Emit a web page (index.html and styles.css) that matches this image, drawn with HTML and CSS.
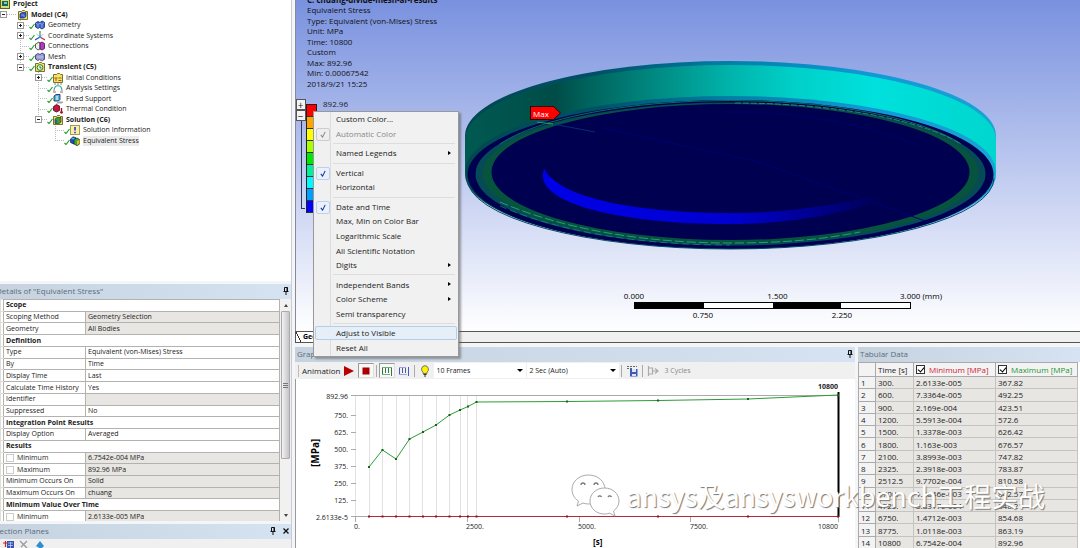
FILE: index.html
```html
<!DOCTYPE html>
<html lang="en">
<head>
<meta charset="utf-8">
<title>Mechanical - Equivalent Stress</title>
<link rel="stylesheet" href="styles.css">
</head>
<body>
<svg class="defs" aria-hidden="true">
  <symbol id="folder" viewBox="0 0 10 10"><path d="M.5 9.500V1.500h3l1-1h2l1 1h2v8z" fill="#f3e36a" stroke="#6b6220" stroke-width=".9"/></symbol>
  <symbol id="i-model" viewBox="0 0 10 10"><use href="#folder"/><path d="M2 4l2-1.500h4v4L6 8H2z" fill="#3556c8" stroke="#122a77" stroke-width=".7"/><path d="M3 5h3v2" fill="none" stroke="#9db7ff" stroke-width=".7"/></symbol>
  <symbol id="i-project" viewBox="0 0 10 10"><rect x=".5" y="0" width="9" height="9.500" fill="#d8dc72" stroke="#5d6420"/><rect x="2" y="2" width="6" height="5" fill="#16685a"/><path d="M4 3h3v2H4z" fill="#7bd0ba"/></symbol>
  <symbol id="i-geo" viewBox="0 0 10 10"><path d="M.5 3L3 1.500 5 2.500 7 1l2.500 1.300v5L7 9 4.500 7.500 3 8.500.5 7z" fill="#3b62c4" stroke="#142c70" stroke-width=".8"/><path d="M1 3.300l2 1.200 2-1.500 2 1.500 2-1.800M3 4.500v3M7 4.500V8" fill="none" stroke="#a9c4ff" stroke-width=".7"/></symbol>
  <symbol id="i-axes" viewBox="0 0 10 10"><path d="M5 6V0" stroke="#2b9c3e" stroke-width="1.200"/><path d="M5 6L0 9" stroke="#2945d0" stroke-width="1.200"/><path d="M5 6l5 3" stroke="#d02b2b" stroke-width="1.200"/><path d="M1.500 3L5 6l3.500-3" fill="none" stroke="#8a9fd8" stroke-width=".7"/><circle cx="5" cy="6" r="1.200" fill="#4d8fe0"/></symbol>
  <symbol id="i-conn" viewBox="0 0 10 10"><path d="M.5 3L4 1l1 1v6L3 9 .5 7z" fill="#eee" stroke="#333" stroke-width=".8"/><path d="M5 2l2-1 2.500 1.500v5L7 9 5 8z" fill="#b23bc0" stroke="#401050" stroke-width=".8"/></symbol>
  <symbol id="i-mesh" viewBox="0 0 10 10"><path d="M.5 3L3 1.500 5 2.500 7 1l2.500 1.300v5L7 9 4.500 7.500 3 8.500.5 7z" fill="#8688c8" stroke="#303060" stroke-width=".8"/><path d="M1 5h8M3 2v6M5 3v5M7 2v7" stroke="#dfe0ff" stroke-width=".5"/></symbol>
  <symbol id="i-trans" viewBox="0 0 10 10"><use href="#folder"/><circle cx="5" cy="5.500" r="2.900" fill="#dff5d8" stroke="#268526"/><path d="M5 4v2h1.500" fill="none" stroke="#222" stroke-width=".7"/></symbol>
  <symbol id="i-init" viewBox="0 0 10 10"><use href="#folder"/><path d="M1.500 5h3M3 5v3M5.500 5h3M5.500 7.500h3" stroke="#a05a10" stroke-width="1"/></symbol>
  <symbol id="i-anal" viewBox="0 0 10 10"><path d="M1 8c0-7 8-7 8 0" fill="none" stroke="#3ba59a" stroke-width="1.100"/><path d="M1 1h2M4 1h2M7 1h2" stroke="#667" stroke-width=".8"/><path d="M0 9h3M7 9h3" stroke="#c04040" stroke-width=".9"/></symbol>
  <symbol id="i-fix" viewBox="0 0 10 10"><path d="M1 2l2-1.500h4v5L5.500 7H1z" fill="#55b8df" stroke="#124" stroke-width=".8"/><path d="M4 2v4" stroke="#fff"/><path d="M4 9.500l2-2M6 9.500l2-2M8 9.500l2-2" stroke="#222" stroke-width=".8"/></symbol>
  <symbol id="i-therm" viewBox="0 0 10 10"><path d="M.5 2.500L3.500.5l3 1.500v4.500l-3 1.500-3-1.500z" fill="#c01545" stroke="#500818" stroke-width=".8"/><path d="M8.500 4v3" stroke="#a01020" stroke-width="1.400"/><circle cx="8.500" cy="8.300" r="1.400" fill="#a01020"/></symbol>
  <symbol id="i-sol" viewBox="0 0 10 10"><use href="#folder"/><path d="M2 4l2-1.500h4v4.500L6 8.500H2z" fill="#29a83a" stroke="#123" stroke-width=".6"/><path d="M2.300 5h1.500v2.500H2.300z" fill="#2347d8"/><path d="M6 4h1.500v2H6z" fill="#e8401c"/></symbol>
  <symbol id="i-info" viewBox="0 0 10 10"><rect x=".5" y=".5" width="9" height="9" fill="#f8efae" stroke="#a89a48"/><path d="M5 2v3.500M5 6.800v1.400" stroke="#1b2fb0" stroke-width="1.500"/></symbol>
  <symbol id="i-stress" viewBox="0 0 10 10"><path d="M.5 3L3 .8l3 1v5.500L3.500 8 .5 6.500z" fill="#2346cc" stroke="#112" stroke-width=".6"/><path d="M4 3.500L7 2l2.700 1.500V8L7 9.700 4 8z" fill="#33ad38" stroke="#112" stroke-width=".6"/><path d="M7 5l2.500-1.200v3.700L7 9z" fill="#f0b020"/><path d="M1 3l2-1.500 2 1-1 1z" fill="#30c8d8"/></symbol>
  <symbol id="i-check" viewBox="0 0 6 8"><path d="M.5 6l1.500 1.500L5.500 3" fill="none" stroke="#27a32c" stroke-width="1.200"/></symbol>
  <symbol id="i-plus" viewBox="0 0 7 7"><rect x=".5" y=".5" width="6" height="6" fill="#fff" stroke="#999"/><path d="M2 3.500h3M3.500 2v3" stroke="#222"/></symbol>
  <symbol id="i-minus" viewBox="0 0 7 7"><rect x=".5" y=".5" width="6" height="6" fill="#fff" stroke="#999"/><path d="M2 3.500h3" stroke="#222"/></symbol>
  <symbol id="i-pin" viewBox="0 0 6 8"><path d="M1.500 .5h3v4h-3zM.5 4.500h5M3 5v3M4 .5v4" fill="none" stroke="#111" stroke-width="1"/></symbol>
  <symbol id="i-tick" viewBox="0 0 8 8"><path d="M1.500 4.500l2 2.500L6.500 1" fill="none" stroke="currentColor" stroke-width="1.200"/></symbol>
</svg>

<div class="app">
  <aside class="side">
    <nav class="outline" aria-label="Outline">
      <svg class="branches" width="90" height="150" viewBox="0 0 90 150" aria-hidden="true"><path d="M7 14.500h9M20.500 20v47M24 25.500h6M24 35.500h6M20 46.500h10M24 56.500h6M24 67.500h6M38.500 72v47M42 77.500h6M38 88.500h10M38 98.500h10M38 109.500h10M42 119.500h6M55.500 124v16M55 130.500h10M55 140.500h10"/></svg>
      <ul class="tree">
        <li class="bold"><svg class="ico"><use href="#i-project"/></svg>Project</li>
        <li class="bold l1"><svg class="exp"><use href="#i-minus"/></svg><svg class="chk"></svg><svg class="ico"><use href="#i-model"/></svg>Model (C4)</li>
        <li class="l2"><svg class="exp"><use href="#i-plus"/></svg><svg class="chk"><use href="#i-check"/></svg><svg class="ico"><use href="#i-geo"/></svg>Geometry</li>
        <li class="l2"><svg class="exp"><use href="#i-plus"/></svg><svg class="chk"><use href="#i-check"/></svg><svg class="ico"><use href="#i-axes"/></svg>Coordinate Systems</li>
        <li class="l2"><svg class="exp"></svg><svg class="chk"><use href="#i-check"/></svg><svg class="ico"><use href="#i-conn"/></svg>Connections</li>
        <li class="l2"><svg class="exp"><use href="#i-plus"/></svg><svg class="chk"><use href="#i-check"/></svg><svg class="ico"><use href="#i-mesh"/></svg>Mesh</li>
        <li class="bold l2"><svg class="exp"><use href="#i-minus"/></svg><svg class="chk"><use href="#i-check"/></svg><svg class="ico"><use href="#i-trans"/></svg>Transient (C5)</li>
        <li class="l3"><svg class="exp"><use href="#i-plus"/></svg><svg class="chk"><use href="#i-check"/></svg><svg class="ico"><use href="#i-init"/></svg>Initial Conditions</li>
        <li class="l3"><svg class="exp"></svg><svg class="chk"><use href="#i-check"/></svg><svg class="ico"><use href="#i-anal"/></svg>Analysis Settings</li>
        <li class="l3"><svg class="exp"></svg><svg class="chk"><use href="#i-check"/></svg><svg class="ico"><use href="#i-fix"/></svg>Fixed Support</li>
        <li class="l3"><svg class="exp"></svg><svg class="chk"><use href="#i-check"/></svg><svg class="ico"><use href="#i-therm"/></svg>Thermal Condition</li>
        <li class="bold l3"><svg class="exp"><use href="#i-minus"/></svg><svg class="chk"><use href="#i-check"/></svg><svg class="ico"><use href="#i-sol"/></svg>Solution (C6)</li>
        <li class="l4"><svg class="exp"></svg><svg class="chk"><use href="#i-check"/></svg><svg class="ico"><use href="#i-info"/></svg>Solution Information</li>
        <li class="l4"><svg class="exp"></svg><svg class="chk"><use href="#i-check"/></svg><svg class="ico"><use href="#i-stress"/></svg><span class="current">Equivalent Stress</span></li>
      </ul>
    </nav>

    <section class="details">
      <header class="bar"><h2>Details of "Equivalent Stress"</h2><svg class="pin"><use href="#i-pin"/></svg></header>
      <div class="sheet">
        <table class="props">
          <colgroup><col class="c-gut"><col class="c-name"><col></colgroup>
          <tbody>
          <tr class="group"><td></td><th colspan="2">Scope</th></tr>
          <tr><td></td><td>Scoping Method</td><td class="ro">Geometry Selection</td></tr>
          <tr><td></td><td>Geometry</td><td class="ro">All Bodies</td></tr>
          <tr class="group"><td></td><th colspan="2">Definition</th></tr>
          <tr><td></td><td>Type</td><td>Equivalent (von-Mises) Stress</td></tr>
          <tr><td></td><td>By</td><td>Time</td></tr>
          <tr><td></td><td>Display Time</td><td>Last</td></tr>
          <tr><td></td><td>Calculate Time History</td><td>Yes</td></tr>
          <tr><td></td><td>Identifier</td><td class="ro"></td></tr>
          <tr><td></td><td>Suppressed</td><td>No</td></tr>
          <tr class="group"><td></td><th colspan="2">Integration Point Results</th></tr>
          <tr><td></td><td>Display Option</td><td>Averaged</td></tr>
          <tr class="group"><td></td><th colspan="2">Results</th></tr>
          <tr><td></td><td><label><input type="checkbox">Minimum</label></td><td class="ro">6.7542e-004 MPa</td></tr>
          <tr><td></td><td><label><input type="checkbox">Maximum</label></td><td class="ro">892.96 MPa</td></tr>
          <tr><td></td><td>Minimum Occurs On</td><td class="ro">Solid</td></tr>
          <tr><td></td><td>Maximum Occurs On</td><td class="ro">chuang</td></tr>
          <tr class="group"><td></td><th colspan="2">Minimum Value Over Time</th></tr>
          <tr><td></td><td><label><input type="checkbox">Minimum</label></td><td class="ro">2.6133e-005 MPa</td></tr>
          </tbody>
        </table>
        <div class="scroll"><i class="up"></i><div class="thumb"><i></i></div><i class="down"></i></div>
      </div>
    </section>

    <section class="planes">
      <header class="bar"><h2>Section Planes</h2><svg class="pin"><use href="#i-pin"/></svg><svg class="close" viewBox="0 0 6 6"><path d="M.5.5l5 5M5.500.5l-5 5" stroke="#111" stroke-width="1.300"/></svg></header>
      <div class="planes-tools">
        <svg width="60" height="10" viewBox="0 0 60 10"><path d="M3 4h5M5.500 2v6" stroke="#c22" stroke-width="1.200"/><rect x="7" y="2" width="7" height="7" fill="#3854b0"/><path d="M8 4h5M8 6.500h5M10.500 3v6" stroke="#c5d2ff" stroke-width=".7"/><path d="M20 2l7 7M27 2l-6 6" stroke="#999" stroke-width="1.300"/><path d="M36 7l4-5 4 5-3 3z" fill="#2d8fd0"/></svg>
      </div>
    </section>
  </aside>

  <main class="work">
    <section class="view">
      <svg class="model" viewBox="0 0 785 331" aria-label="Stress result on ring model">
        <defs>
          <linearGradient id="wall" gradientUnits="userSpaceOnUse" x1="170" y1="0" x2="701" y2="0">
            <stop offset="0" stop-color="#005a52"/><stop offset=".17" stop-color="#004c47"/><stop offset=".22" stop-color="#005f59"/><stop offset=".35" stop-color="#00877f"/><stop offset=".5" stop-color="#00b4ac"/><stop offset=".62" stop-color="#00d0c8"/><stop offset=".77" stop-color="#00e0dc"/><stop offset="1" stop-color="#00d6ce"/>
          </linearGradient>
          <linearGradient id="rim" gradientUnits="userSpaceOnUse" x1="170" y1="0" x2="701" y2="0">
            <stop offset="0" stop-color="#00484e"/><stop offset=".25" stop-color="#005068"/><stop offset=".5" stop-color="#0080a8"/><stop offset=".75" stop-color="#1098d4"/><stop offset="1" stop-color="#18a4d4"/>
          </linearGradient>
          <linearGradient id="arc" gradientUnits="userSpaceOnUse" x1="248" y1="0" x2="585" y2="0">
            <stop offset="0" stop-color="#0000e8"/><stop offset=".55" stop-color="#0000d0"/><stop offset=".8" stop-color="#000090"/><stop offset="1" stop-color="#000052"/>
          </linearGradient>
        </defs>
        <path d="M170 136a265.500 75 0 0 1 531 0v38a265.500 75 0 0 1-531 0z" fill="url(#rim)"/>
        <path d="M170 140a265.500 75 0 0 1 531 0v30a265.500 75 0 0 1-531 0z" fill="url(#wall)"/>
        <ellipse cx="435.500" cy="171" rx="265" ry="75" fill="url(#rim)"/>
        <ellipse cx="435.500" cy="174.500" rx="263" ry="74.500" fill="#000050"/>
        <path d="M172 178a263.500 71 0 0 0 527 0" fill="none" stroke="#064a66" stroke-width="1"/>
        <ellipse cx="435.500" cy="174" rx="255" ry="71.500" fill="#064a58"/>
        <ellipse cx="435.500" cy="173.500" rx="248" ry="70" fill="#06543e"/>
        <path d="M205 144a250 71 0 0 1 461 0" fill="none" stroke="#0c6b58" stroke-width="1"/>
        <path d="M440 103a250 71 0 0 1 226 41" fill="none" stroke="#2c9a7c" stroke-width=".8" stroke-dasharray="6 2"/>
        <path d="M205 202c60 26 140 41 230 41 50 0 90-3 130-11" fill="none" stroke="#2fae88" stroke-width=".8" stroke-dasharray="9 3"/>
        <path d="M205 206c60 26 140 39 230 39" fill="none" stroke="#1c9a74" stroke-width=".6" stroke-dasharray="7 4"/>
        <ellipse cx="435.500" cy="172" rx="239" ry="68" fill="#000051"/>
        <path d="M308 128l155 34 170 60" fill="none" stroke="#000070" stroke-width="1"/>
        <path d="M242 122l16 2" fill="none" stroke="#20a070" stroke-width="1"/>
        <path d="M258 124l42 8" fill="none" stroke="#083a78" stroke-width=".8"/>
        <path d="M430 112c80 0 140 12 195 34" fill="none" stroke="#000070" stroke-width=".8"/>
        <path d="M249 168C258 190 312 213 440 213c50 0 95-7 145-18v6c-40 13-90 23-150 23C320 224 243 202 248 173z" fill="url(#arc)"/>
        <path d="M235.500 106.500h23l7 6.500-7 6.500h-23z" fill="#f00" stroke="#300"/>
        <text class="tag" x="238" y="117">Max</text>
      </svg>
      <div class="caption">
        <b>C: chuang-divide-mesh-af-results</b>
        <span>Equivalent Stress</span><span>Type: Equivalent (von-Mises) Stress</span><span>Unit: MPa</span><span>Time: 10800</span><span>Custom</span><span>Max: 892.96</span><span>Min: 0.00067542</span><span>2018/9/21 15:25</span>
      </div>
      <div class="legend">
        <div class="zoomer"><button type="button">+</button><button type="button">−</button><i></i></div>
        <div class="bands"><i class="b1"></i><i class="b2"></i><i class="b3"></i><i class="b4"></i><i class="b5"></i><i class="b6"></i><i class="b7"></i><i class="b8"></i><i class="b9"></i></div>
        <span>892.96</span>
      </div>
      <div class="ruler">
        <div class="marks"><span>0.000</span><span>1.500</span><span>3.000 (mm)</span></div>
        <div class="rule"><i></i><i></i><i></i><i></i></div>
        <div class="marks lower"><span>0.750</span><span>2.250</span></div>
      </div>
    </section>
    <div class="tabs"><a href="#geometry">Geometry</a></div>

    <div class="bottom">
      <section class="graph">
        <header class="bar"><h2>Graph</h2><svg class="pin"><use href="#i-pin"/></svg></header>
        <div class="tools">
          <i class="grip"></i><span>Animation</span>
          <button type="button" aria-label="Play"><svg viewBox="0 0 12 12"><path d="M1 1l10 5-10 5z" fill="#b80000"/></svg></button>
          <button type="button" class="on" aria-label="Stop"><svg viewBox="0 0 12 12"><path d="M2.500 2.500h7v7h-7z" fill="#a80000"/></svg></button>
          <i class="sep"></i>
          <button type="button" class="on" aria-label="Distributed"><svg viewBox="0 0 12 12"><path d="M1.500 2v8M4.500 2v6M7.500 2v6M10.500 2v9" stroke="#2f7a3c"/><path d="M1 2.500h10M1 9.500h8" stroke="#73ad7c"/></svg></button>
          <button type="button" aria-label="Result sets"><svg viewBox="0 0 12 12"><path d="M1.500 2v8M4.500 2v6M7.500 2v6M10.500 2v9" stroke="#4658b8"/><path d="M1 2.500h7M1 9.500h8" stroke="#99a5dc"/></svg></button>
          <i class="sep"></i>
          <button type="button" aria-label="Highlight"><svg viewBox="0 0 12 12"><path d="M6 .7a3.600 3.600 0 0 1 2 6.500V8.500H4V7.200A3.600 3.600 0 0 1 6 .7z" fill="#fff200" stroke="#554" stroke-width=".8"/><path d="M4.500 9.500h3M5 11h2" stroke="#333"/></svg></button>
          <div class="pick"><select aria-label="Frames"><option>10 Frames</option></select></div>
          <div class="pick"><select aria-label="Duration"><option>2 Sec (Auto)</option></select></div>
          <i class="sep"></i>
          <button type="button" aria-label="Export video"><svg viewBox="0 0 12 12"><path d="M1 1.500h10M1 3.500h6" stroke="#667" stroke-width="1" stroke-dasharray="2 1"/><path d="M4 4h7.500v7.500H4z" fill="#3b5bb5"/><path d="M6 4h4v3H6zM6 9h4v2H6z" fill="#dce4ff"/></svg></button>
          <i class="sep"></i>
          <button type="button" aria-label="Cycles"><svg viewBox="0 0 12 12"><path d="M1.500 1v10M1.500 3h4v6h-4M5.500 6h6M8 3.500L11 6 8 8.500" fill="none" stroke="#aaa" stroke-width="1.200"/></svg></button>
          <span class="dim">3 Cycles</span>
        </div>
        <div class="plot">
          <svg viewBox="295 378 560 170" preserveAspectRatio="xMinYMin meet" aria-label="Stress over time">
            <path class="grid" d="M355.500 395v126M369.500 395v121M382.500 395v121M396.500 395v121M409.500 395v121M422.500 395v121M436.500 395v121M449.500 395v121M460.500 395v121M467.500 395v126M476.500 395v121"/>
            <path class="axis" d="M351 394.500h487M351 414.500h5M351 431.500h5M351 448.500h5M351 465.500h5M351 482.500h5M351 499.500h5M351 515.500h18M355.500 516v5M467.500 516v5M579.500 516v5M690.500 516v5M838.500 516v5"/>
            <path d="M838.500 391v125" stroke="#000" stroke-width="2"/>
            <path d="M369 515.500H838" stroke="#b4283c"/>
            <path d="M369 466l13.500-17 13.500 9 13.500-20 13.500-7 13-7 13.500-10 10.500-5 8-3.500 8.500-4.500 90.500-.5 91-1 90-1.500 90-4" fill="none" stroke="#2f9a35"/>
            <path class="dots" stroke="#14651a" d="M369 466h0M382.500 449h0M396 458h0M409.500 438h0M423 431h0M436 424h0M449.500 414h0M460 409h0M468 405.500h0M476.500 401h0M567 400.500h0M658 399.500h0M748 398h0M838 394.500h0"/>
            <path class="dots" stroke="#8e1020" d="M369 515.500h0M382.500 515.500h0M396 515.500h0M409.500 515.500h0M423 515.500h0M436 515.500h0M449.500 515.500h0M460 515.500h0M468 515.500h0M476.500 515.500h0M567 515.500h0M658 515.500h0M748 515.500h0M838 515.500h0"/>
            <g class="yl"><text x="348" y="398">892.96</text><text x="348" y="417">750.</text><text x="348" y="434">625.</text><text x="348" y="451">500.</text><text x="348" y="468">375.</text><text x="348" y="485">250.</text><text x="348" y="502">125.</text><text x="348" y="519">2.6133e-5</text><text x="838" y="528">10800</text><text class="strong" x="838" y="388">10800</text></g>
            <g><text x="354" y="528">0.</text><text x="466" y="528">2500.</text><text x="578" y="528">5000.</text><text x="690" y="528">7500.</text></g>
            <text class="unit" x="593" y="544">[s]</text>
            <text class="unit big" transform="translate(319 466) rotate(-90)">[MPa]</text>
          </svg>
        </div>
      </section>

      <section class="tabular">
        <header class="bar"><h2>Tabular Data</h2></header>
        <table class="data">
          <colgroup><col class="c-no"><col class="c-time"><col><col></colgroup>
          <thead><tr><th></th><th>Time [s]</th><th><label class="red"><input type="checkbox" checked>Minimum [MPa]</label></th><th><label class="green"><input type="checkbox" checked>Maximum [MPa]</label></th></tr></thead>
          <tbody>
          <tr><th>1</th><td>300.</td><td>2.6133e-005</td><td>367.82</td></tr>
          <tr><th>2</th><td>600.</td><td>7.3364e-005</td><td>492.25</td></tr>
          <tr><th>3</th><td>900.</td><td>2.169e-004</td><td>423.51</td></tr>
          <tr><th>4</th><td>1200.</td><td>5.5913e-004</td><td>572.6</td></tr>
          <tr><th>5</th><td>1500.</td><td>1.3378e-003</td><td>626.42</td></tr>
          <tr><th>6</th><td>1800.</td><td>1.163e-003</td><td>676.57</td></tr>
          <tr><th>7</th><td>2100.</td><td>3.8993e-003</td><td>747.82</td></tr>
          <tr><th>8</th><td>2325.</td><td>2.3918e-003</td><td>783.87</td></tr>
          <tr><th>9</th><td>2512.5</td><td>9.7702e-004</td><td>810.58</td></tr>
          <tr><th>10</th><td>2700.</td><td>1.2846e-003</td><td>842.57</td></tr>
          <tr><th>11</th><td>4725.</td><td>5.8317e-004</td><td>848.21</td></tr>
          <tr><th>12</th><td>6750.</td><td>1.4712e-003</td><td>854.68</td></tr>
          <tr><th>13</th><td>8775.</td><td>1.0118e-003</td><td>863.19</td></tr>
          <tr><th>14</th><td>10800</td><td>6.7542e-004</td><td>892.96</td></tr>
          </tbody>
        </table>
      </section>
    </div>

    <div class="menu" role="menu">
      <button type="button" role="menuitem">Custom Color...</button>
      <button type="button" role="menuitem" class="off"><svg class="mark"><use href="#i-tick"/></svg>Automatic Color</button>
      <hr>
      <button type="button" role="menuitem" class="sub">Named Legends</button>
      <hr>
      <button type="button" role="menuitem"><svg class="mark"><use href="#i-tick"/></svg>Vertical</button>
      <button type="button" role="menuitem">Horizontal</button>
      <hr>
      <button type="button" role="menuitem"><svg class="mark"><use href="#i-tick"/></svg>Date and Time</button>
      <button type="button" role="menuitem">Max, Min on Color Bar</button>
      <button type="button" role="menuitem">Logarithmic Scale</button>
      <button type="button" role="menuitem">All Scientific Notation</button>
      <button type="button" role="menuitem" class="sub">Digits</button>
      <hr>
      <button type="button" role="menuitem" class="sub">Independent Bands</button>
      <button type="button" role="menuitem" class="sub">Color Scheme</button>
      <button type="button" role="menuitem">Semi transparency</button>
      <hr>
      <button type="button" role="menuitem" class="hot">Adjust to Visible</button>
      <button type="button" role="menuitem">Reset All</button>
    </div>

    <div class="mark-over">
      <svg width="50" height="44" viewBox="0 0 50 44" aria-hidden="true">
        <g fill="#fff" stroke="#aaa" stroke-width="1"><path d="M17.500 1C8 1 1 7.500 1 15.500c0 5 2.500 9 6.500 11.500L6 32l6-3c2 .6 3.500 1 5.500 1C27 30 34 23.500 34 15.500S27 1 17.500 1z"/><path d="M33.500 14C25 14 19 20 19 27s6 13 14.500 13c2 0 3.500-.3 5-.8L44 42l-1.500-5c3.500-2.500 5.500-6 5.500-10 0-7-6-13-14.500-13z"/></g>
        <path d="M10 11a2 2 0 0 1 4 0M23 11a2 2 0 0 1 4 0M27 23a2 2 0 0 1 3.500 0M37 23a2 2 0 0 1 3.500 0" fill="none" stroke="#777" stroke-width="1.300"/>
      </svg>
      <span>ansys及ansysworkbench工程实战</span>
    </div>
  </main>
</div>
</body>
</html>
```
FILE: styles.css
```css
* { box-sizing: border-box; }
body {
  margin: 0;
  background: #f4f5f7;
  color: #222;
  font-family: "Open Sans", "Noto Sans", sans-serif;
  font-size: 7px;
  line-height: 10px;
  overflow: hidden;
}
.defs { position: absolute; width: 0; height: 0; }
button, select, input { font: inherit; color: inherit; margin: 0; padding: 0; }
svg { display: block; flex: none; }

.app {
  display: grid;
  grid-template-columns: 292px minmax(0, 1fr);
  gap: 3px;
  height: 100vh;
}
.side {
  display: grid;
  grid-template-rows: minmax(0, 1fr) 237px 24px;
  gap: 3px;
  min-height: 0;
  border-right: 1px solid #c8cdd4;
}

/* panel title bars */
.bar {
  display: flex;
  align-items: center;
  gap: 7px;
  height: 15px;
  padding: 0 2px 2px;
  background: linear-gradient(90deg, #c6d3df, #d5e3f2);
  color: #5d6b7c;
}
.bar h2 { flex: 1; margin: 0; font-size: 8px; font-weight: 400; }
.pin { width: 6px; height: 8px; }
.close { width: 6px; height: 6px; }

/* outline tree */
.outline { position: relative; background: #fff; overflow: hidden; }
.branches { position: absolute; top: 0; left: 0; fill: none; stroke: #bbb; stroke-dasharray: 1 1; }
.tree {
  position: relative;
  display: grid;
  grid-template-rows: repeat(14, 1fr);
  height: 147px;
  margin: -1px 0 0;
  padding: 0;
  list-style: none;
}
.tree li { display: flex; align-items: center; min-height: 0; white-space: nowrap; }
.tree .l2 { padding-left: 17px; }
.tree .l3 { padding-left: 35px; }
.tree .l4 { padding-left: 52px; }
.tree .bold { font-weight: 700; }
.exp { width: 7px; height: 7px; margin-right: 5px; }
.chk { width: 6px; height: 8px; }
.ico { width: 10px; height: 10px; margin-right: 3px; }
.current { background: #ececec; }

/* details sheet */
.details { min-height: 0; display: flex; flex-direction: column; }
.details h2 { margin-left: -6px; }
.planes h2 { margin-left: -7px; }
.sheet { flex: 1; min-height: 0; display: flex; overflow: hidden; background: #fff; }
.props, .data { table-layout: fixed; border-collapse: collapse; }
.props { flex: 1; height: 224px; }
.c-gut { width: 3px; }
.c-name { width: 82px; }
.props td, .props th {
  padding: 0 2px;
  border: 1px solid #b4b2ae;
  text-align: left;
  white-space: nowrap;
  line-height: 8px;
}
.props td:first-child { border-color: #e0ded8; border-right-color: #b4b2ae; padding: 0; }
.props .ro { background: #e8e6e2; }
.props label { display: flex; align-items: center; gap: 3px; }
.props input {
  appearance: none;
  width: 8px;
  height: 8px;
  border: 1px solid #ccc;
  background: #fff;
}
.scroll { display: flex; flex-direction: column; align-items: center; width: 11px; background: #f1f1f1; }
.thumb {
  display: grid;
  place-items: center;
  height: 148px;
  width: 9px;
  margin: 4px 0 auto;
  border: 1px solid #aaa;
  border-radius: 1px;
  background: linear-gradient(90deg, #f2f2f2, #c4c4c8);
}
.thumb i { width: 5px; height: 5px; background: repeating-linear-gradient(#777 0 1px, transparent 1px 2px); }
.up, .down { border: 2px solid transparent; }
.up { border-top: 0; border-bottom: 3px solid #444; margin-top: 5px; }
.down { border-bottom: 0; border-top: 3px solid #444; margin-bottom: 4px; }
.planes-tools { height: 10px; background: #f0f0f0; overflow: hidden; }

/* work area */
.work { position: relative; min-width: 0; display: flex; flex-direction: column; }
.view {
  position: relative;
  flex: 1;
  min-height: 0;
  overflow: hidden;
  background: linear-gradient(#7991df, #fff);
  border-left: 1px solid #889;
  font-size: 8px;
}
.model { position: absolute; top: 0; left: -1px; width: 785px; height: 331px; }
.tag { font-size: 8px; fill: #fff; }
.caption {
  position: absolute;
  top: -5px;
  left: 11px;
  display: grid;
  grid-template-rows: repeat(9, 1fr);
  height: 94px;
  white-space: nowrap;
  color: #111;
}
.legend { position: absolute; top: 99px; left: -1px; display: flex; }
.zoomer { display: flex; flex-direction: column; align-items: center; width: 11px; }
.zoomer button {
  width: 10px;
  height: 11px;
  border: 1px solid #555;
  background: #f4f4f4;
  line-height: 8px;
  font-size: 10px;
}
.zoomer i { width: 4px; height: 88px; margin-left: 4px; border: 1px solid #335; border-width: 0 0 1px 1px; }
.bands { display: grid; grid-auto-rows: 12px; width: 11px; height: 109px; margin: 5px 6px 0 0; border: 1px solid #222; background: #fff; }
.bands i { border-bottom: 1px solid #333; }
.b1 { background: #f00; }
.b2 { background: #ffa500; }
.b3 { background: #ff0; }
.b4 { background: #a8ff00; }
.b5 { background: #00e800; }
.b6 { background: #00f0a0; }
.b7 { background: #00f8ff; }
.b8 { background: #00a0ff; }
.b9 { background: #00f; }

.ruler { position: absolute; top: 291px; left: 338px; width: 277px; color: #000; }
.marks { display: flex; justify-content: space-between; height: 10px; }
.marks span { width: 0; display: flex; justify-content: center; white-space: nowrap; }
.marks span:last-child:nth-child(3) { margin-right: -10px; }
.marks.lower { padding: 0 69px; }
.rule { display: flex; height: 7px; margin: 1px 0 1px; border: 1px solid #000; }
.rule i { flex: 1; background: #000; }
.rule i:nth-child(even) { background: #fff; }

.tabs { height: 12px; border: 1px solid #555; border-right: 0; background: #f0f0f0; }
.tabs a {
  display: block;
  width: 54px;
  height: 10px;
  padding-left: 7px;
  background: linear-gradient(62deg, #fff 4px, #333 4px, #333 5px, #fff 5px);
  color: #000;
  font-weight: 700;
  text-decoration: none;
}
.bottom {
  display: grid;
  grid-template-columns: minmax(0, 1fr) 222px;
  gap: 3px;
  height: 201px;
  margin-top: 4px;
}
.graph { display: flex; flex-direction: column; min-width: 0; background: #fff; box-shadow: inset 1px 0 #999; }
.tools { display: flex; align-items: center; gap: 1px; height: 17px; padding-left: 3px; background: #f0f0f0; font-size: 8px; }
.tools button { width: 16px; height: 15px; padding: 1px; border: 1px solid transparent; background: none; }
.tools button.on { border-color: #999 #ddd #ddd #999; background: #f8f8f8; }
.tools svg { width: 12px; height: 12px; }
.grip { width: 1px; height: 12px; margin-right: 2px; background: #bbb; }
.sep { width: 1px; height: 12px; margin: 0 1px; background: #aaa; }
.pick { position: relative; width: 92px; height: 15px; background: #fff; font-size: 7px; }
.pick::after {
  content: "";
  position: absolute;
  top: 6px;
  right: 3px;
  border: 3px solid transparent;
  border-top-color: #000;
  border-bottom: 0;
}
.pick select { appearance: none; width: 100%; height: 100%; padding-left: 2px; border: 0; background: none; }
.dim { margin-left: 2px; color: #888; font-size: 7px; }
.plot { flex: 1; min-height: 0; }
.plot svg { width: 100%; height: 100%; }
.grid { stroke: #e2e2e2; fill: none; }
.axis { stroke: #aaa; fill: none; }
.dots { stroke-width: 2; stroke-linecap: square; }
.yl { text-anchor: end; }
.plot text { font-size: 7px; fill: #222; }
.plot .strong { font-weight: 700; }
.plot .unit { font-size: 8px; font-weight: 700; fill: #000; }
.plot .big { font-size: 10px; }

.tabular { display: flex; flex-direction: column; min-width: 0; background: #fff; }
.data { flex: 1; width: 220px; height: 187px; font-size: 8px; }
.data thead tr { height: 14px; }
.c-no { width: 17px; }
.c-time { width: 38px; }
.data td, .data th {
  padding: 0 2px;
  border: 1px solid #c6c4c0;
  background: #e8e6e2;
  font-weight: 400;
  text-align: left;
  white-space: nowrap;
  line-height: 9px;
}
.data th { background: #f3f3f3; border-color: #aaa; padding: 0 2px; }
.data label { display: flex; align-items: center; gap: 4px; }
.data input {
  appearance: none;
  width: 9px;
  height: 9px;
  border: 1px solid #333;
  background: #fff;
  position: relative;
}
.data input::after {
  content: "";
  position: absolute;
  top: 0;
  left: 2px;
  width: 3px;
  height: 5px;
  border: solid #000;
  border-width: 0 1px 1px 0;
  rotate: 40deg;
}
.red { color: #d02030; }
.green { color: #1d9330; }

/* context menu */
.menu {
  position: absolute;
  top: 111px;
  left: 18px;
  display: flex;
  flex-direction: column;
  width: 146px;
  height: 246px;
  padding: 0 1px 1px;
  border: 1px solid #999;
  background: linear-gradient(90deg, #f0f0f0 16px, #ddd 16px, #ddd 17px, #f1f1f1 17px);
  box-shadow: 2px 2px 2px #5558;
  font-size: 8px;
}
.menu button {
  position: relative;
  flex: 1;
  min-height: 0;
  padding: 0 0 0 20px;
  border: 1px solid transparent;
  background: none;
  text-align: left;
  line-height: 10px;
  white-space: nowrap;
}
.menu hr { width: 122px; height: 1px; margin: 2px 0 2px 18px; border: 0; background: #ddd; }
.menu .off { color: #888; }
.menu .hot { border-color: #b3cdec; border-radius: 2px; background: #e6eef7; }
.mark { position: absolute; top: 0; left: 0; width: 14px; height: 13px; padding: 2px; border: 1px solid #bcd0f0; border-radius: 2px; background: #eaf1fb; color: #1a2fa0; }
.off .mark { border-color: #ccc; background: #eee; color: #888; }
.sub::after {
  content: "";
  position: absolute;
  top: 4px;
  right: 5px;
  border: 2px solid transparent;
  border-left: 3px solid #000;
  border-right: 0;
}

/* watermark across both lower panels */
.mark-over {
  position: absolute;
  right: 35px;
  bottom: 30px;
  display: flex;
  align-items: center;
  gap: 5px;
  color: #fff;
  font: 27px/36px "Noto Sans CJK SC", sans-serif;
  text-shadow: 1px 1px 1px #777;
  white-space: nowrap;
}
```
